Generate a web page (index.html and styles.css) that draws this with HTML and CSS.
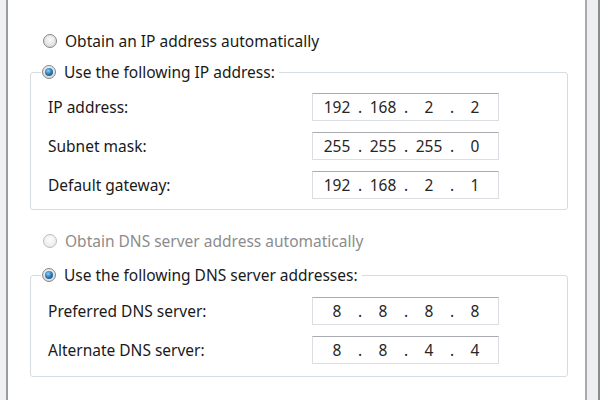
FILE: index.html
```html
<!DOCTYPE html>
<html>
<head>
<meta charset="utf-8">
<link rel="stylesheet" href="styles.css">
</head>
<body>
<div class="window">
  <div class="edge-left"></div>
  <div class="panel">
    <div class="option"><span class="radio"></span><span>Obtain an IP address automatically</span></div>
    <fieldset class="group group-ip">
      <legend class="option"><span class="radio checked"></span><span>Use the following IP address:</span></legend>
      <div class="row"><span class="label">IP address:</span>
        <div class="ip"><span class="seg">192</span><span class="dot">.</span><span class="seg">168</span><span class="dot">.</span><span class="seg">2</span><span class="dot">.</span><span class="seg">2</span></div></div>
      <div class="row"><span class="label">Subnet mask:</span>
        <div class="ip"><span class="seg">255</span><span class="dot">.</span><span class="seg">255</span><span class="dot">.</span><span class="seg">255</span><span class="dot">.</span><span class="seg">0</span></div></div>
      <div class="row"><span class="label">Default gateway:</span>
        <div class="ip"><span class="seg">192</span><span class="dot">.</span><span class="seg">168</span><span class="dot">.</span><span class="seg">2</span><span class="dot">.</span><span class="seg">1</span></div></div>
    </fieldset>
    <div class="option disabled opt-dns"><span class="radio"></span><span>Obtain DNS server address automatically</span></div>
    <fieldset class="group group-dns">
      <legend class="option"><span class="radio checked"></span><span>Use the following DNS server addresses:</span></legend>
      <div class="row"><span class="label">Preferred DNS server:</span>
        <div class="ip"><span class="seg">8</span><span class="dot">.</span><span class="seg">8</span><span class="dot">.</span><span class="seg">8</span><span class="dot">.</span><span class="seg">8</span></div></div>
      <div class="row"><span class="label">Alternate DNS server:</span>
        <div class="ip"><span class="seg">8</span><span class="dot">.</span><span class="seg">8</span><span class="dot">.</span><span class="seg">4</span><span class="dot">.</span><span class="seg">4</span></div></div>
    </fieldset>
  </div>
  <div class="edge-right"></div>
</div>
</body>
</html>
```

FILE: styles.css
```css
html, body {
  margin: 0;
  padding: 0;
  background: #ffffff;
}
body {
  font-family: "Noto Sans", "Open Sans", sans-serif;
  font-size: 15.5px;
  color: #1a1a1a;
}
.window {
  display: flex;
  width: 600px;
  height: 400px;
  overflow: hidden;
}
.edge-left {
  width: 6px;
  background: #eff1f3;
  border-right: 2px solid #9c9c9c;
}
.panel {
  flex: 1;
  background: #ffffff;
  padding-top: 30px;
  border-right: 2px solid #a9a9a9;
}
.edge-right {
  width: 11px;
  background: #eceef1;
  border-right: 2px solid #8b8b8b;
}
.option {
  display: flex;
  align-items: center;
  height: 22px;
  line-height: 22px;
  margin-left: 35px;
  white-space: nowrap;
}
.radio {
  width: 14px;
  height: 14px;
  box-sizing: border-box;
  border-radius: 50%;
  border: 1px solid #85878a;
  background: radial-gradient(circle at 50% 40%, #fbfbfb 0%, #e4e4e4 55%, #cbcbcb 100%);
  margin-right: 8px;
  display: flex;
  align-items: center;
  justify-content: center;
  flex: none;
}
.radio.checked::after {
  content: "";
  width: 8px;
  height: 8px;
  border-radius: 50%;
  background: radial-gradient(circle at 40% 35%, #8fd0f5 0%, #2f7fbe 45%, #0d3d6c 100%);
}
.disabled {
  color: #8c8c8c;
}
.disabled .radio {
  border-color: #bdbdbd;
  background: radial-gradient(circle at 50% 40%, #fdfdfd 0%, #efefef 60%, #e2e2e2 100%);
}
.group {
  margin: 9px 17px 0 22px;
  padding: 4px 0 5px 17px;
  border: 1px solid #d5dde2;
  border-radius: 3px;
  min-width: 0;
}
.group legend {
  margin-left: -7px;
  padding: 0 4px 0 1px;
}
.group-dns {
  margin-top: 12px;
  padding-top: 5px;
  padding-bottom: 7px;
}
.opt-dns {
  margin-top: 20px;
}
.row {
  display: flex;
  align-items: center;
  height: 39px;
}
.label {
  width: 264px;
  flex: none;
}
.ip {
  display: flex;
  align-items: center;
  width: 187px;
  height: 28px;
  box-sizing: border-box;
  padding-left: 6px;
  border: 1px solid #dadde1;
  border-top-color: #a9acb0;
  font-size: 15.5px;
  color: #262626;
}
.seg {
  width: 36px;
  text-align: center;
}
.dot {
  width: 10px;
  text-align: center;
}
```
